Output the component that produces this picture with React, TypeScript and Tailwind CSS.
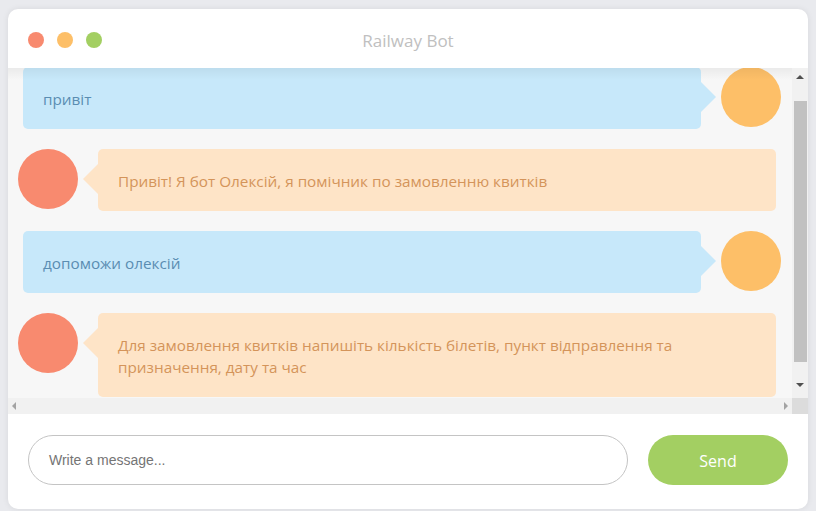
import React from "react";

const font = { fontFamily: '"Open Sans", "Noto Sans", sans-serif' };

function UserMsg({ text }: { text: string }) {
  return (
    <div className="flex items-start pl-[15px]">
      <div className="w-[678px] shrink-0 rounded-[5px] bg-[#c7e8fa] px-5 pb-[19px] pt-[21px] text-[15.3px] leading-[22px] text-[#5a8db2]">
        {text}
      </div>
      <div className="mt-[15px] h-0 w-0 shrink-0 border-y-[15px] border-l-[15px] border-y-transparent border-l-[#c7e8fa]" />
      <div className="ml-[5px] h-[60px] w-[60px] shrink-0 rounded-full bg-[#fdbf68]" />
    </div>
  );
}

function BotMsg({ text }: { text: string }) {
  return (
    <div className="flex items-start pl-[10px]">
      <div className="h-[60px] w-[60px] shrink-0 rounded-full bg-[#f88a6f]" />
      <div className="ml-[5px] mt-[15px] h-0 w-0 shrink-0 border-y-[15px] border-r-[15px] border-y-transparent border-r-[#fee4c7]" />
      <div className="w-[678px] shrink-0 rounded-[5px] bg-[#fee4c7] px-5 pb-[19px] pt-[21px] text-[15.3px] leading-[22px] text-[#d4945a]">
        {text}
      </div>
    </div>
  );
}

export default function App() {
  return (
    <div className="min-h-[511px] w-full bg-[#e9eaee] pl-2 pt-[9px]" style={font}>
      <div className="flex h-[500px] w-[800px] flex-col overflow-hidden rounded-[10px] bg-white shadow-[0_0_6px_rgba(0,0,0,0.08)]">
        <div className="relative flex h-[59px] shrink-0 items-center pl-[20px] pt-[2px]">
          <div className="flex gap-[13px]">
            <span className="h-4 w-4 rounded-full bg-[#f88a6f]" />
            <span className="h-4 w-4 rounded-full bg-[#fdbf68]" />
            <span className="h-4 w-4 rounded-full bg-[#a3cf62]" />
          </div>
          <div className="absolute inset-x-0 top-0 flex h-full items-center justify-center pt-[5px] text-[17px] text-[#c0c0c0]">
            Railway Bot
          </div>
        </div>
        <div className="flex h-[330px] shrink-0">
          <div className="relative flex-1 overflow-hidden bg-[#f7f7f7]">
            <div className="pointer-events-none absolute inset-x-0 top-0 z-10 h-[12px] bg-gradient-to-b from-[rgba(0,0,0,0.05)] to-transparent" />
            <div className="-mt-[1px] flex flex-col gap-5">
              <UserMsg text="привіт" />
              <BotMsg text="Привіт! Я бот Олексій, я помічник по замовленню квитків" />
              <UserMsg text="допоможи олексій" />
              <BotMsg text="Для замовлення квитків напишіть кількість білетів, пункт відправлення та призначення, дату та час" />
            </div>
          </div>
          <div className="relative flex w-4 shrink-0 flex-col items-center bg-[#f1f1f1]">
            <div className="mt-[7px] h-0 w-0 border-x-[4px] border-b-[4px] border-x-transparent border-b-[#505050]" />
            <div className="mt-[22px] h-[261px] w-[13px] bg-[#c1c1c1]" />
            <div className="mt-[21px] h-0 w-0 border-x-[4px] border-t-[4px] border-x-transparent border-t-[#505050]" />
          </div>
        </div>
        <div className="flex h-4 shrink-0">
          <div className="flex flex-1 items-center justify-between bg-[#f1f1f1] px-[4px]">
            <div className="h-0 w-0 border-y-[4px] border-r-[4px] border-y-transparent border-r-[#a3a3a3]" />
            <div className="h-0 w-0 border-y-[4px] border-l-[4px] border-y-transparent border-l-[#a3a3a3]" />
          </div>
          <div className="w-4 bg-[#dcdcdc]" />
        </div>
        <div className="flex flex-1 items-start gap-5 px-5 pt-[21px]">
          <div className="flex h-[50px] flex-1 items-center rounded-full border border-[#c4c4c4] pl-5">
            <span className="text-[14px] text-[#757575]" style={{ fontFamily: '"Liberation Sans", Arial, sans-serif' }}>
              Write a message...
            </span>
          </div>
          <div className="flex h-[50px] w-[140px] items-center justify-center rounded-full bg-[#a3cf62] pt-[2px] text-[16px] text-white">
            Send
          </div>
        </div>
      </div>
    </div>
  );
}
